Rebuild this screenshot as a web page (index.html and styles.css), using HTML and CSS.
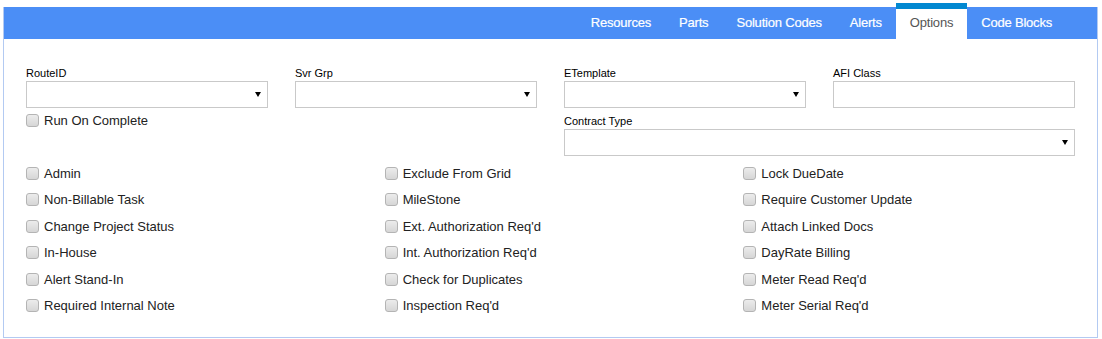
FILE: index.html
```html
<!DOCTYPE html>
<html lang="en">
  <head>
    <meta charset="utf-8">
    <title>Task Options</title>
    <link rel="stylesheet" href="styles.css">
  </head>
  <body>
    <div class="panel">
      <div class="tabbar">
        <ul class="tabs">
          <li><a href="#">Resources</a></li>
          <li><a href="#">Parts</a></li>
          <li><a href="#">Solution Codes</a></li>
          <li><a href="#">Alerts</a></li>
          <li class="active"><a href="#">Options</a></li>
          <li><a href="#">Code Blocks</a></li>
        </ul>
      </div>
      <form class="options" action="javascript:void(0);">
        <div class="fields">
          <div class="field">
            <label>RouteID</label>
            <div class="dropdown"><select></select></div>
          </div>
          <div class="field">
            <label>Svr Grp</label>
            <div class="dropdown"><select></select></div>
          </div>
          <div class="field">
            <label>ETemplate</label>
            <div class="dropdown"><select></select></div>
          </div>
          <div class="field">
            <label>AFI Class</label>
            <input type="text">
          </div>
          <label class="check run"><input type="checkbox"> Run On Complete</label>
          <div class="field wide">
            <label>Contract Type</label>
            <div class="dropdown"><select></select></div>
          </div>
        </div>
        <div class="checks">
          <label class="check"><input type="checkbox"> Admin</label>
          <label class="check"><input type="checkbox"> Exclude From Grid</label>
          <label class="check"><input type="checkbox"> Lock DueDate</label>
          <label class="check"><input type="checkbox"> Non-Billable Task</label>
          <label class="check"><input type="checkbox"> MileStone</label>
          <label class="check"><input type="checkbox"> Require Customer Update</label>
          <label class="check"><input type="checkbox"> Change Project Status</label>
          <label class="check"><input type="checkbox"> Ext. Authorization Req'd</label>
          <label class="check"><input type="checkbox"> Attach Linked Docs</label>
          <label class="check"><input type="checkbox"> In-House</label>
          <label class="check"><input type="checkbox"> Int. Authorization Req'd</label>
          <label class="check"><input type="checkbox"> DayRate Billing</label>
          <label class="check"><input type="checkbox"> Alert Stand-In</label>
          <label class="check"><input type="checkbox"> Check for Duplicates</label>
          <label class="check"><input type="checkbox"> Meter Read Req'd</label>
          <label class="check"><input type="checkbox"> Required Internal Note</label>
          <label class="check"><input type="checkbox"> Inspection Req'd</label>
          <label class="check"><input type="checkbox"> Meter Serial Req'd</label>
        </div>
      </form>
    </div>
  </body>
</html>
```

FILE: styles.css
```css
body {
    margin: 0;
    padding-top: 7px;
    font-family: "Liberation Sans", Arial, sans-serif;
    color: #222;
}

.panel {
    margin: 0 4px 0 3px;
    border: 1px solid #b3caf2;
    border-top: 0;
}

.tabbar {
    height: 32px;
    background: #4b8ef6;
}
.tabs {
    display: flex;
    justify-content: flex-end;
    margin: 0;
    padding: 0 31px 0 0;
    list-style: none;
}
.tabs a {
    display: block;
    padding: 0 14px;
    line-height: 32px;
    font-size: 13px;
    letter-spacing: -0.2px;
    color: #fff;
    text-decoration: none;
    -webkit-text-stroke: 0.2px #fff;
}
.tabs .active a {
    margin-top: -4px;
    border-top: 6px solid #0288d1;
    padding-bottom: 2px;
    line-height: 28px;
    background: #fff;
    color: #555;
    -webkit-text-stroke: 0;
}

.options {
    padding: 27px 22px 22px 22px;
}

.fields {
    display: grid;
    grid-template-columns: repeat(4, 1fr);
    column-gap: 27px;
    row-gap: 6px;
}
.field label {
    display: block;
    font-size: 11px;
    line-height: 15px;
    color: #000;
}
.field.wide {
    grid-column: 3 / 5;
}

.dropdown {
    position: relative;
}
.dropdown::after {
    content: "";
    position: absolute;
    right: 7px;
    top: 11px;
    border-left: 3px solid transparent;
    border-right: 3px solid transparent;
    border-top: 5px solid #000;
}
select, input[type="text"] {
    display: block;
    box-sizing: border-box;
    width: 100%;
    height: 27px;
    margin: 0;
    border: 1px solid #c9c9c9;
    border-radius: 0;
    background: #fff;
    appearance: none;
}

.check {
    display: flex;
    align-items: center;
    font-size: 13px;
    line-height: 18px;
    color: #222;
}
.check input {
    appearance: none;
    box-sizing: border-box;
    width: 13px;
    height: 13px;
    margin: -1px 5px 0 0;
    border: 1px solid #b4b4b4;
    border-radius: 3px;
    background: linear-gradient(#ececec, #d6d6d6);
}
.check.run {
    grid-column: 1;
    margin-top: -2px;
    align-self: start;
}

.checks {
    display: grid;
    grid-template-columns: repeat(3, 1fr);
    column-gap: 27px;
    row-gap: 8.4px;
    margin-top: 9px;
}
```
